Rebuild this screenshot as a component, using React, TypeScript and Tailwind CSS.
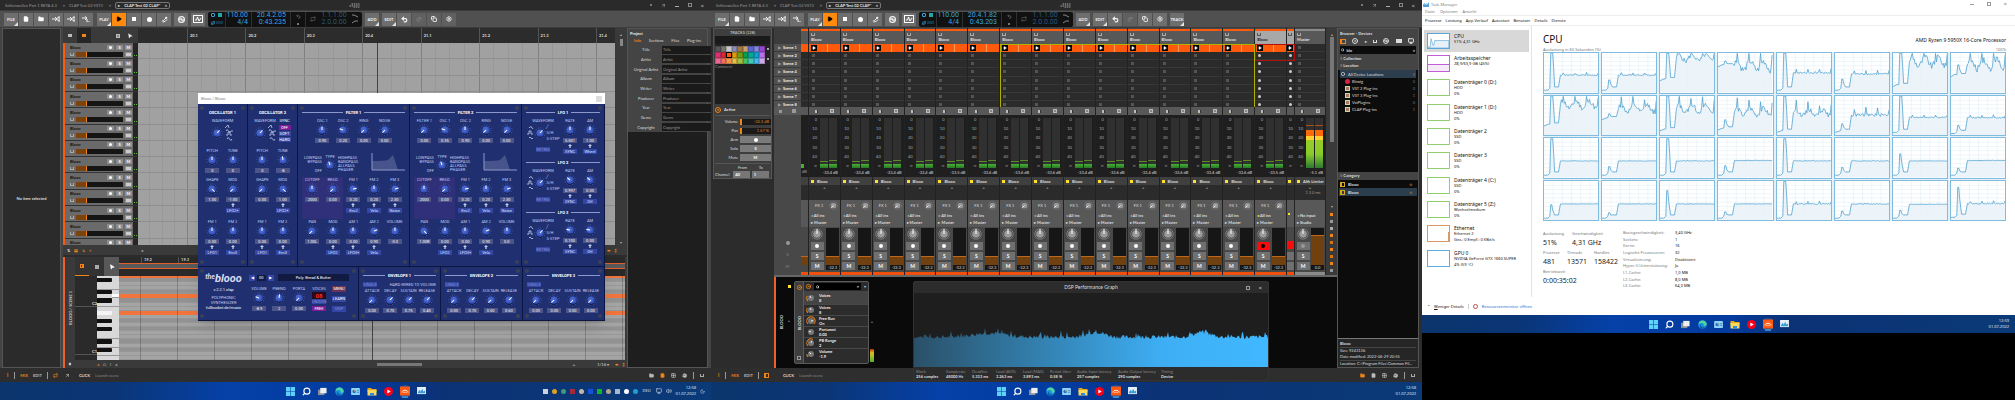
import type { ReactNode } from "react"
import {
  ArrowUpRight,
  Circle,
  CircleDot,
  Copy,
  Disc3,
  FileText,
  Folder,
  Grid2x2,
  Hand,
  Monitor,
  Moon,
  MousePointer2,
  Play,
  Redo2,
  Repeat,
  Search,
  Settings,
  Undo2,
  Volume2,
} from "lucide-react"

/* ---------- helpers ---------- */

function noise(seed: number) {
  let s = seed * 9301 + 49297
  return () => {
    s = (s * 9301 + 49297) % 233280
    return s / 233280
  }
}

function range(n: number) {
  return Array.from({ length: n }, (_, i) => i)
}

/* ---------- windows taskbar ---------- */

function WindowsLogo() {
  return (
    <svg viewBox="0 0 10 10" className="size-[9px]">
      <path d="M0 0h4.7v4.7H0zM5.3 0H10v4.7H5.3zM0 5.3h4.7V10H0zM5.3 5.3H10V10H5.3z" fill="#5fd0f8" />
    </svg>
  )
}

function EdgeLogo() {
  return (
    <svg viewBox="0 0 10 10" className="size-[9px]">
      <circle cx="5" cy="5" r="4.8" fill="#1b8fd8" />
      <path d="M.5 4C1.5 0 8 -.8 9.6 4c.3 2-1.600 2.800-3.400 2.300C7 5 5.500 3 3.500 3.500 2 3.500 1 4 .5 4z" fill="#4fd6a0" />
      <path d="M3.500 5c-.8 2 .8 4 4.300 3.300C5.500 10.400 2.500 9.500 2.300 7c0-1 .5-1.700 1.200-2z" fill="#0b4f9c" />
    </svg>
  )
}

const trayColors = [
  "bg-[#c8d4e0]",
  "bg-[#e0a020] rounded-full",
  "bg-[#3f9a78] rounded-full",
  "bg-[#a8283c]",
  "bg-[#c9b7a6] rounded-full",
  "bg-[#1450d8]",
  "bg-[#12b42c]",
  "bg-[#b8a48c] rounded-full",
  "bg-[#a8b8cc]",
  "bg-white rounded-full",
  "bg-[#1fa0d0] rounded-full",
]

function Taskbar({ time, tray }: { time: string; tray?: boolean }) {
  return (
    <footer className="grid h-[18px] shrink-0 grid-cols-[1fr_auto_1fr] items-center bg-[linear-gradient(90deg,#0b356c_0%,#0b3575_16%,#0541a8_32%,#033a9e_52%,#0b3275_62%,#0b3a78_100%)]">
      <span />
      <nav className="flex items-center gap-[7px]" aria-label="Taskbar">
        <button aria-label="Start" className="grid w-[9px] place-items-center">
          <WindowsLogo />
        </button>
        <button aria-label="Search" className="grid w-[9px] place-items-center text-white">
          <Search className="size-[9px] -scale-x-100" strokeWidth={3} />
        </button>
        <button aria-label="Task view" className="grid w-[10px] place-items-center">
          <svg viewBox="0 0 10 10" className="size-[9px]">
            <rect x="0" y="3" width="7" height="6" fill="#8a8f98" />
            <rect x="2.500" y="1" width="7" height="6" fill="#eceef0" />
          </svg>
        </button>
        <button aria-label="Edge" className="grid w-[9px] place-items-center">
          <EdgeLogo />
        </button>
        <button aria-label="Widgets" className="grid w-[9px] place-items-center">
          <svg viewBox="0 0 10 8" className="h-[7px] w-[9px]">
            <rect width="10" height="8" rx="1" fill="#8fd4f6" />
            <circle cx="3.500" cy="4" r="2" fill="#1c72c4" />
            <path d="M3.500 4V2a2 2 0 0 1 2 2z" fill="#f79a3c" />
            <path d="M6.500 3h2.500M6.500 5h2.500" stroke="#2c78b4" strokeWidth=".8" />
          </svg>
        </button>
        <button aria-label="Explorer" className="grid w-[10px] place-items-center">
          <svg viewBox="0 0 10 9" className="h-[9px] w-[10px]">
            <path d="M.5 1h3.500l1 1h4.500v3h-9z" fill="#e8a81c" />
            <path d="M.5 3h9v5.500h-9z" fill="#fbd85c" />
            <path d="M3 6h4v2.500H3z" fill="#2c8ce0" />
          </svg>
        </button>
        <button aria-label="YouTube Music" className="grid w-[9px] place-items-center">
          <svg viewBox="0 0 10 10" className="size-[9px]">
            <circle cx="5" cy="5" r="5" fill="#f8001c" />
            <path d="M3.700 2.700 7.500 5 3.700 7.300z" fill="#fff" />
          </svg>
        </button>
        <button aria-label="Bitwig Studio" className="grid w-[10px] place-items-center rounded-sm bg-white/10">
          <svg viewBox="0 0 10 12" className="h-[13px] w-[10px]">
            <rect y="1" width="10" height="9" fill="#ff5a14" />
            <path d="M2 7c0-3 6-3 6 0M4 7.500V6.300M6 7.500V6.300" stroke="#fff" strokeWidth=".9" fill="none" />
            <rect x="2" y="11" width="6" height="1" fill="#5fc4f8" />
          </svg>
        </button>
        <button aria-label="Task Manager" className="grid w-[9px] place-items-center">
          <svg viewBox="0 0 10 9" className="h-[8px] w-[9px]">
            <rect width="10" height="8" fill="#e4f0f8" />
            <path d="M1 6 3 3l1 2 2-3 1 3 2-1v3H1z" fill="#3b9cd8" />
          </svg>
        </button>
      </nav>
      <div className="flex items-center justify-end gap-[4px] pr-[6px] font-['Open_Sans',sans-serif] text-[4px] leading-[6px] text-white/90">
        {tray && (
          <>
            <span className="flex gap-[4px]">
              {trayColors.map((c) => (
                <i key={c} className={`size-[5px] ${c}`} />
              ))}
            </span>
            <span className="px-[1px]">DEU</span>
            <Monitor className="size-[6px]" />
            <Volume2 className="size-[6px]" />
          </>
        )}
        <span className="text-right">
          {time}
          <br />
          01.07.2022
        </span>
        {tray && <Moon className="size-[5px]" />}
      </div>
    </footer>
  )
}

/* ---------- Bitwig shared chrome ---------- */

function TitleBar() {
  return (
    <header className="flex h-[10px] shrink-0 items-center bg-[#2a2a2a] pr-[7px] pl-[5px] text-[#9a9a9a]">
      <div className="flex flex-1 items-center" role="tablist">
        <button role="tab" className="flex w-[64px] items-center justify-between pr-[4px]">
          Schlenwellen Part 1 BETA 4.3 <b>×</b>
        </button>
        <button role="tab" className="flex w-[46px] items-center justify-between pr-[4px]">
          CLAP Test 02 VST3 <b>×</b>
        </button>
        <button
          role="tab"
          aria-selected="true"
          className="flex h-[7px] w-[55px] items-center justify-between rounded-[2px] border border-[#777] px-[2px] font-bold text-[#e4e4e4]"
        >
          <span>▸</span> CLAP Test 02 CLAP* <b>×</b>
        </button>
      </div>
      <svg viewBox="0 0 10 5" className="h-[5px] w-[11px]">
        <path d="M2 1h8M0 3h10M4 5h6" stroke="#aaa" strokeWidth="1" strokeDasharray="1.500 .7" />
      </svg>
      <div className="flex flex-1 items-center justify-end gap-[9px] text-[#c4c4c4]">
        <i className="size-[2px] bg-[#777]" />
        <button aria-label="Full screen">
          <ArrowUpRight className="size-[5px]" />
        </button>
        <button aria-label="Minimize" className="mt-[2px] h-px w-[4px] bg-[#aaa]" />
        <button aria-label="Restore" className="size-[4px] border border-[#888]" />
        <button aria-label="Close" className="text-[6px]">
          ×
        </button>
      </div>
    </header>
  )
}

function Tool({ label, on, dim, menu, children }: { label: string; on?: boolean; dim?: boolean; menu?: boolean; children?: ReactNode }) {
  return (
    <button
      aria-label={label}
      className={`relative grid h-[13px] w-[14px] place-items-center font-bold ${
        on ? "bg-[#ff8a0c] text-black" : dim ? "bg-[#606060] text-[#888]" : "bg-[#6e6e6e] text-[#f2f2f2]"
      }`}
    >
      {children ?? label}
      {menu && <i className="absolute right-0 bottom-0 size-0 border-2 border-t-transparent border-r-white/80 border-b-white/80 border-l-transparent" />}
    </button>
  )
}

function ArrowDisk({ down }: { down?: boolean }) {
  return (
    <svg viewBox="0 0 8 6" className="h-[6px] w-[8px]">
      <path d={down ? "M0 2h4M3 .5 5 2 3 4M5 3v3h3" : "M0 3h4M3 1l2 2-2 2M6 1v4h2V1z"} stroke="currentColor" fill="none" />
    </svg>
  )
}

function Toolbar({ position, clock, tracks }: { position: string; clock: string; tracks?: boolean }) {
  return (
    <div className="flex h-[18px] shrink-0 items-center gap-[3px] border-y border-[#3c3c3c] bg-[#505050] pl-[4px]">
      <div className="flex gap-px">
        <Tool label="FILE" menu />
        <Tool label="New">
          <FileText className="size-[6px] fill-white" />
        </Tool>
        <Tool label="Open">
          <Folder className="size-[6px] fill-white" />
        </Tool>
        <Tool label="Save">
          <ArrowDisk />
        </Tool>
        <Tool label="Export">
          <ArrowDisk />
        </Tool>
        <Tool label="Import">
          <ArrowDisk down />
        </Tool>
      </div>
      <div className="flex gap-px pl-[1px]">
        <Tool label="PLAY" menu />
        <Tool label="Play" on>
          <Play className="size-[6px] fill-black" />
        </Tool>
        <Tool label="Stop">
          <i className="size-[4px] bg-white" />
        </Tool>
        <Tool label="Record">
          <i className="size-[5px] rounded-full bg-white" />
        </Tool>
        <Tool label="Automation">
          <svg viewBox="0 0 8 8" className="size-[7px]">
            <path d="M1 6 3 5 6 2M2 7l3-1 2-2" stroke="#fff" fill="none" />
            <circle cx="6" cy="2" r="1.200" fill="#fff" />
          </svg>
        </Tool>
      </div>
      <Tool label="Fill">
        <Disc3 className="size-[7px]" strokeWidth={4} />
      </Tool>
      <Tool label="Groove">
        <svg viewBox="0 0 10 8" className="h-[8px] w-[10px]">
          <rect x=".5" y=".5" width="9" height="7" fill="none" stroke="#fff" />
          <path d="M2 5h1.500l1-3 1.500 4 2-3" stroke="#fff" fill="none" />
        </svg>
      </Tool>
      <div className="flex h-[15px] w-[154px] divide-x divide-[#303030] rounded-[2px] bg-[#111] font-[Roboto,sans-serif] text-[7px] leading-[7px] text-[#3aa4e0]">
        <div className="grid w-[18px] grid-cols-2 place-items-center px-[2px]">
          <i className="size-[4px] rounded-[1px] border border-[#3aa4e0]" />
          <i className="size-[4px] bg-[#20a8a8]" />
          <Repeat className="size-[4px]" strokeWidth={4} />
          <i className="h-[3px] w-[7px] bg-[#143848]" />
        </div>
        <div className="w-[26px] pr-[3px] text-right">
          110.00
          <br />
          4/4
        </div>
        <div className="w-[39px] pr-[4px] text-right">
          {position}
          <br />
          {clock}
        </div>
        <div className="grid w-[15px] place-items-center text-[#999]">
          <Undo2 className="size-[5px]" />
          <i className="size-[2px] bg-[#777]" />
        </div>
        <div className="flex flex-1 items-center justify-between px-[4px] text-[#2b587a]">
          <Repeat className="size-[6px] text-[#777]" />
          <span className="text-right">
            1.1.1.00
            <br />
            2.0.0.00
          </span>
          <svg viewBox="0 0 6 12" className="h-[12px] w-[6px]">
            <path d="M0 2h2l4 2M0 10l3-2h3" stroke="#888" fill="none" />
          </svg>
        </div>
      </div>
      <Tool label="ADD" menu />
      <div className="flex gap-px">
        <Tool label="EDIT" menu />
        <Tool label="Undo">
          <Undo2 className="size-[7px]" strokeWidth={4} />
        </Tool>
        <Tool label="Redo" dim>
          <Redo2 className="size-[6px]" strokeWidth={3} />
        </Tool>
        <Tool label="Duplicate" dim={!tracks}>
          <Copy className="size-[6px] text-[#ddd]" strokeWidth={4} />
        </Tool>
        <Tool label="Settings" dim={!tracks}>
          <Settings className="size-[6px] text-[#ddd]" strokeWidth={4} />
        </Tool>
      </div>
      {tracks && <Tool label="TRACK" menu />}
    </div>
  )
}

function Piano({ className = "border-[#aaa]" }: { className?: string }) {
  return <i className={`h-[3px] w-[4px] border border-t-0 ${className}`} />
}

function StatusBar({ mixer }: { mixer?: boolean }) {
  return (
    <div className="flex h-[14px] shrink-0 items-center gap-[5px] bg-[#2e2e2e] px-[7px] text-[#bbb]">
      <b className="text-[5px] text-[#f08418]">i</b>
      <i className="ml-[1px] h-[7px] w-px bg-[#999]" />
      <button className="font-bold text-[#f08418]">MIX</button>
      <button className="font-bold">EDIT</button>
      <i className="h-[7px] w-px bg-[#999]" />
      {mixer ? (
        <i className="mr-[5px] size-[5px] border border-l-2 border-[#f08418]" />
      ) : (
        <>
          <Repeat className="size-[5px] text-[#f08418]" strokeWidth={3} />
          <ArrowUpRight className="ml-[2px] size-[5px]" strokeWidth={3} />
        </>
      )}
      <b className="ml-[4px] text-[#ddd]">CLICK</b>
      <span className="text-[#8a8a8a]">Launch scene</span>
      <div className="ml-auto flex items-center gap-[6px]">
        <Folder className={`size-[5px] fill-current ${mixer ? "text-[#f08418]" : ""}`} />
        <FileText className={`size-[5px] fill-current ${mixer ? "" : "text-[#f08418]"}`} />
        <Grid2x2 className="size-[5px]" strokeWidth={3} />
        <Hand className="size-[5px] fill-current" />
        <i className="h-[7px] w-px bg-[#999]" />
        <Piano />
      </div>
    </div>
  )
}

/* ---------- screen 1: arranger ---------- */

function TrackHeader() {
  return (
    <div className="flex border-b border-[#333] bg-[#6a6a6a] pl-[3px]">
      <div className="flex min-w-0 flex-1 flex-col justify-center gap-[2px] pl-[2px]">
        <div className="flex items-center">
          <b className="flex-1 leading-[5px] text-[#111]">Blooo</b>
          <div className="flex gap-[2px] pr-[1px] font-bold text-white">
            <button aria-label="Arm" className="grid h-[5px] w-[7px] place-items-center bg-[#8c8c8c]">
              <i className="size-[3px] rounded-full bg-white" />
            </button>
            <button className="grid h-[5px] w-[7px] place-items-center bg-[#8c8c8c]">S</button>
            <button className="grid h-[5px] w-[7px] place-items-center bg-[#8c8c8c]">M</button>
          </div>
        </div>
        <div className="flex items-center gap-[2px] pr-[1px]">
          <Piano />
          <div className="h-[5px] flex-1 bg-[#151515]">
            <div className="h-full w-[11px] border-r border-[#f08418] bg-[#7a4310]" />
          </div>
          <i className="h-[5px] w-[7px] border border-[#8c8c8c] bg-[#ccc]" />
        </div>
      </div>
      <div className="flex w-[5px] items-end gap-px bg-[#262626] px-px pb-[2px]">
        <i className="h-px w-px bg-[#4fc030]" />
        <i className="h-px w-px bg-[#4fc030]" />
      </div>
    </div>
  )
}

const beats = ["20.1", "20.2", "20.3", "20.4", "21.1", "21.2", "21.3", "21.4"]
const blackRows = [1, 4, 6, 9, 11, 13, 16, 18]
const noteRows = [0, 5, 9]

function Arranger() {
  return (
    <div className="flex h-[217px] shrink-0">
      <section className="w-[75px] shrink-0">
        <div className="flex h-[15px] items-center bg-[#3a3a3a] text-[#bbb]">
          <div className="grid h-full w-[14px] place-items-center">
            <i className="h-[3px] w-[4px] bg-current" />
          </div>
          <div className="grid h-full w-[14px] place-items-center bg-[#262626]">
            <i className="h-[3px] w-[4px] bg-[#f08418]" />
          </div>
          <i className="ml-auto size-[4px] border border-current bg-[#888]" />
          <MousePointer2 className="mr-[5px] ml-[7px] size-[6px] rotate-12 fill-white" />
        </div>
        <div className="h-[202px] overflow-hidden border-l-2 border-[#ff5a0c]">
          <div className="grid h-[212px] grid-rows-13">
            {range(13).map((i) => (
              <TrackHeader key={i} />
            ))}
          </div>
        </div>
      </section>
      <section className="flex min-w-0 flex-1 flex-col">
        <div className="grid h-[15px] grid-cols-[49px_repeat(7,minmax(0,1fr))_19px] bg-[#2c2c2c]">
          <span />
          {beats.map((b) => (
            <span key={b} className="border-l border-[#555] pt-[5px] pl-[2px] font-bold text-[#ddd]">
              {b}
            </span>
          ))}
        </div>
        <div className="relative flex-1 overflow-hidden bg-[#a1a1a1]">
          <div className="grid h-full grid-cols-[49px_repeat(7,minmax(0,1fr))_19px]">
            {range(9).map((i) => (
              <div key={i} className={`grid grid-cols-4 divide-x divide-[#989898] ${i ? "border-l border-[#808080]" : ""}`}>
                {i < 8 && range(4).map((n) => <i key={n} />)}
              </div>
            ))}
          </div>
          <div className="absolute inset-x-0 top-0 grid h-[212px] grid-rows-13">
            {range(13).map((i) => (
              <i key={i} className="border-b border-[#8e8e8e]" />
            ))}
          </div>
          <i className="absolute inset-y-0 left-1/2 w-px bg-[#444]" />
        </div>
      </section>
      <div className="flex w-[12px] shrink-0 flex-col items-center justify-between bg-[#3a3a3a] pt-[4px] text-[#aaa]">
        <div className="flex flex-col items-center gap-[2px]">
          <span>▴</span>
          <i className="h-[7px] w-[3px] bg-[#888]" />
        </div>
        <span>▾</span>
      </div>
    </div>
  )
}

function PianoRoll() {
  return (
    <div className="flex flex-1 border-l-2 border-[#f0602c] bg-[#3a3a3a]">
      <div className="flex w-[10px] flex-col items-center justify-between pt-[34px] pb-[2px]">
        <b className="rotate-180 text-[#ccc] [writing-mode:vertical-rl]">BLOOO / SCENE 1</b>
        <Circle className="size-[4px] fill-[#ccc]" />
      </div>
      <div className="flex w-[44px] flex-col">
        <div className="flex h-[19px] items-center bg-[#333]">
          <span className="grid h-full w-[14px] place-items-center border-b border-[#f08418]">
            <i className="size-[4px] border border-r-2 border-[#f08418]" />
          </span>
          <span className="grid flex-1 place-items-center">
            <i className="size-[4px] bg-[#aaa]" />
          </span>
          <span className="grid h-full w-[15px] place-items-center bg-[#585858]">
            <MousePointer2 className="size-[6px] rotate-12 fill-white text-white" />
          </span>
        </div>
        <div className="flex h-[84px]">
          <div className="flex w-[22px] flex-col items-end bg-[#2a2a2a] pt-[25px] font-bold text-[#ddd]">
            <span className="w-full border-b border-[#555] text-right">C2</span>
            <span className="mt-auto mb-[5px] w-full border-b border-[#555] text-right">C1</span>
          </div>
          <div className="grid flex-1 grid-rows-[2px_repeat(20,minmax(0,1fr))] bg-[#d8d8d8]">
            {range(21).map((i) => (
              <i
                key={i}
                className={
                  blackRows.includes(i)
                    ? `w-[15px] rounded-r-[1px] ${i === 9 ? "bg-[#f4f4f4]" : "bg-[#111]"}`
                    : `${i === 5 ? "ml-[15px] bg-white" : ""} ${i % 2 ? "border-b border-[#999]" : ""}`
                }
              />
            ))}
          </div>
        </div>
        <div className="flex flex-1 items-center gap-[4px] pl-[22px] text-[#bbb]">
          <span className="text-[#f08418]">◂</span>
          <span>⌂</span>
          <span>I</span>
          <span>◂</span>
        </div>
      </div>
      <div className="flex min-w-0 flex-1 flex-col pr-[2px]">
        <div className="h-[19px] bg-[#2a2a2a]">
          <div className="grid h-[6px] grid-cols-[22px_repeat(13,minmax(0,1fr))_2px] leading-[6px] font-bold text-[#ccc]">
            <span />
            {["19.2", "19.3", "19.4", "20.1", "20.2", "20.3", "20.4", "21.1", "21.2", "21.3", "21.4", "22.1", "22.2"].map((b) => (
              <span key={b} className="border-l border-[#555] pl-[2px]">
                {b}
              </span>
            ))}
          </div>
          <div className="h-[6px] border-y border-[#e0602c] bg-[#5a5a5a]" />
        </div>
        <div className="relative h-[84px]">
          <div className="grid h-full grid-rows-[2px_repeat(20,minmax(0,1fr))]">
            {range(21).map((i) => (
              <i
                key={i}
                className={
                  noteRows.includes(i) ? "bg-[#f0743c]" : `border-b border-[#989898] ${blackRows.includes(i) ? "bg-[#929292]" : "bg-[#a4a4a4]"}`
                }
              />
            ))}
          </div>
          <div className="absolute inset-0 grid grid-cols-[22px_repeat(13,minmax(0,1fr))_2px]">
            {range(14).map((i) => (
              <i key={i} className="border-r border-black/20" />
            ))}
          </div>
          <i className="absolute inset-y-0 left-1/2 w-px bg-[#444]" />
        </div>
        <div className="flex flex-1 items-center text-[#bbb]">
          <i className="ml-[51%] h-[3px] w-[45px] bg-[#777]" />
          <span className="ml-auto pr-[22px] font-bold">+</span>
          <span className="pr-[6px] font-bold">1/16 ▾</span>
          <span className="flex gap-[4px] font-bold text-[#f08418]">
            <span>⇹</span>
            <span>↕</span>
          </span>
        </div>
      </div>
    </div>
  )
}

function ProjectPanel() {
  const fields = ["Title", "Artist", "Original Artist", "Album", "Writer", "Producer", "Year", "Genre", "Copyright"]
  return (
    <aside className="flex w-[81px] shrink-0 flex-col border border-[#555] bg-[#1e1e1e]">
      <div className="bg-[#444] px-[2px] pt-[2px] text-[#ddd]">
        <h2 className="leading-[5px] font-bold text-[#eee]">Project</h2>
        <div className="flex h-[9px] items-center justify-between px-[4px]" role="tablist">
          <button role="tab" aria-selected="true" className="font-bold text-[#f08418]">
            Info
          </button>
          <button role="tab">Sections</button>
          <button role="tab">Files</button>
          <button role="tab">Plug-ins</button>
        </div>
        <div className="grid h-[87px] grid-rows-9">
          {fields.map((f) => (
            <div key={f} className="flex items-center">
              <label htmlFor={f} className="w-[32px] text-center">
                {f}
              </label>
              <input id={f} placeholder={f} className="h-[8px] min-w-0 flex-1 bg-[#1a1a1a] pl-[1px] placeholder:text-[#999]" />
            </div>
          ))}
        </div>
      </div>
    </aside>
  )
}

/* ---------- the blooo synth ---------- */

function BlueKnob({ angle = 0 }: { angle?: number }) {
  return (
    <svg viewBox="0 0 14 14" className="size-[12px] shrink-0">
      <circle cx="7" cy="7" r="6" fill="none" stroke="#8ea0dc" strokeWidth="1" strokeDasharray=".5 2.640" />
      <circle cx="7" cy="7.500" r="4.900" fill="#0f1a4c" />
      <circle cx="7" cy="7" r="4.500" fill="#3452b8" />
      <circle cx="6.500" cy="6.300" r="3" fill="#4664cc" />
      <path d="M7 7V2.800" stroke="#fff" strokeWidth="1.200" transform={`rotate(${angle} 7 7)`} />
    </svg>
  )
}

type KnobSpec = { label: string; value?: string; source?: string; angle?: number; hot?: boolean }

function KnobCell({ label, value, source, angle, hot }: KnobSpec) {
  return (
    <div className={`flex min-w-0 flex-1 flex-col items-center ${hot ? "bg-[#30307a]" : ""}`}>
      <span className="h-[6px] leading-[6px] whitespace-nowrap">{label}</span>
      <BlueKnob angle={angle} />
      {value && <span className="mt-[2px] h-[5px] w-[14px] bg-[#4c5488] text-center leading-[5px] text-white">{value}</span>}
      {source && (
        <>
          <svg viewBox="0 0 6 6" className="my-px h-[4px] w-[4px]">
            <path d="M3 0l3 3H4v3H2V3H0z" fill="#c8d0f0" />
          </svg>
          <button className="h-[5px] w-[14px] bg-[#3446a4] leading-[5px] text-[#dfe4ff]">{source}</button>
        </>
      )}
    </div>
  )
}

function KnobRow({ knobs, className }: { knobs: KnobSpec[]; className: string }) {
  return (
    <div className={`flex ${className}`}>
      {knobs.map((k) => (
        <KnobCell key={k.label} {...k} />
      ))}
    </div>
  )
}

function PanelTitle({ children, line }: { children: ReactNode; line?: boolean }) {
  return (
    <h3 className="flex h-[14px] shrink-0 items-center gap-[3px] pt-[2px] font-bold whitespace-nowrap text-white">
      {line && <i className="h-px flex-1 bg-[#8c98cc]" />}
      <span className="mx-auto">{children}</span>
      {line && <i className="h-px flex-1 bg-[#8c98cc]" />}
    </h3>
  )
}

function Screws() {
  return (
    <>
      {["top-[2px] left-[2px]", "top-[2px] right-[2px]", "bottom-[2px] left-[2px]", "bottom-[2px] right-[2px]"].map((p) => (
        <i key={p} className={`absolute size-[4px] rounded-full bg-[#3a4058] ${p}`} />
      ))}
    </>
  )
}

const panel = "relative border-r border-b border-[#0c1640] bg-[#1f2f70] px-[4px]"

function WaveSelector() {
  return (
    <div className="flex items-center justify-center gap-px">
      <BlueKnob angle={45} />
      <svg viewBox="0 0 10 18" className="h-[18px] w-[10px]">
        <path
          d="M1 4l3-3 1 3M2 7q1-3 2.500 0t2.500 0h2M2 11h2V8h2v3h2M3 15q1-3 2.500 0t2.500 0"
          stroke="#c8d0f0"
          strokeWidth=".8"
          fill="none"
        />
      </svg>
    </div>
  )
}

function Oscillator({ index, rows }: { index: number; rows: KnobSpec[][] }) {
  return (
    <section className={`w-[50px] ${panel}`}>
      <Screws />
      <PanelTitle>OSCILLATOR {index}</PanelTitle>
      <div className="flex h-[30px] justify-center gap-px">
        <div className="flex flex-col items-center">
          <span className="h-[6px] leading-[6px]">WAVEFORM</span>
          <WaveSelector />
        </div>
        {index === 2 && (
          <div className="flex w-[14px] flex-col items-center gap-px text-white">
            <span className="h-[6px] leading-[6px]">SYNC</span>
            <button className="h-[5px] w-[12px] bg-[#7a1c98] leading-[5px]">OFF</button>
            <button className="h-[5px] w-[12px] bg-[#3446a4] leading-[5px]">SOFT</button>
            <button className="h-[5px] w-[12px] bg-[#3446a4] leading-[5px]">HARD</button>
          </div>
        )}
      </div>
      <KnobRow className="h-[29px]" knobs={rows[0]} />
      <KnobRow className="h-[42px]" knobs={rows[1]} />
      <KnobRow className="h-[42px]" knobs={rows[2]} />
    </section>
  )
}

function Filter({ index, rows }: { index: number; rows: KnobSpec[][] }) {
  return (
    <section className={`w-[112px] ${panel}`}>
      <Screws />
      <PanelTitle line>FILTER {index}</PanelTitle>
      <KnobRow className={`h-[29px] ${index === 1 ? "px-[10px]" : ""}`} knobs={rows[0]} />
      <div className="flex h-[30px] items-center gap-px">
        <div className="flex w-[20px] flex-col items-end pt-[4px] leading-[4px]">
          <span>LOWPASS</span>
          <span>BYPASS</span>
          <span className="mt-[5px]">OFF</span>
        </div>
        <div className="flex w-[14px] flex-col items-center">
          <span>TYPE</span>
          <BlueKnob angle={-20} />
        </div>
        <div className="flex w-[20px] flex-col pt-[4px] leading-[4px]">
          <span>HIGHPASS</span>
          <span>BANDPASS</span>
          <span>ALLPASS</span>
          <span>PHASER</span>
        </div>
        <svg viewBox="0 0 34 18" className="ml-auto h-[18px] w-[34px]">
          <path d="M1 8q12 0 16-1l5-5 5 15H1z" fill="#47548c" />
          <path d="M1 0v17h33" stroke="#8c98cc" fill="none" />
        </svg>
      </div>
      <KnobRow className="h-[42px]" knobs={rows[1]} />
      <KnobRow className="h-[42px]" knobs={rows[2]} />
    </section>
  )
}

function Lfo({ index, rate, am, source, angle }: { index: number; rate: string; am: string; source: string; angle: number }) {
  return (
    <div>
      <PanelTitle line>LFO {index}</PanelTitle>
      <div className="flex h-[36px]">
        <div className="flex w-[34px] flex-col items-center">
          <span className="h-[6px] leading-[6px]">WAVEFORM</span>
          <div className="flex items-center">
            <svg viewBox="0 0 8 16" className="h-[16px] w-[8px]">
              <path d="M3 3q2-3 4 1M1 9h2V6h2v3h2M3 13q1-2 2 0t2 0" stroke="#c8d0f0" strokeWidth=".8" fill="none" />
            </svg>
            <BlueKnob angle={45} />
            <span className="leading-[6px]">
              ╱<br />
              S/H
              <br />
              S-STEP
            </span>
          </div>
          <button className="mt-auto mb-[2px] h-[5px] w-[14px] bg-[#3446a4] leading-[5px] text-[#8090d0]">RETRIG</button>
        </div>
        <KnobCell label="RATE" value={rate} source="SYNC" angle={angle} />
        <KnobCell label="AM" value={am} source={source} angle={angle} />
      </div>
    </div>
  )
}

function Envelope({ index, values, note }: { index: number; values: string[]; note?: boolean }) {
  const labels = ["ATTACK", "DECAY", "SUSTAIN", "RELEASE"]
  return (
    <section className={`w-[82px] ${panel}`}>
      <Screws />
      <PanelTitle line>ENVELOPE {index}</PanelTitle>
      <div className="flex h-[6px] items-center justify-between">
        <button className="h-[5px] w-[14px] bg-[#3446a4] leading-[5px] text-[#8090d0]">SINGLE</button>
        {note && <span className="whitespace-nowrap">HARD-WIRED TO VOLUME</span>}
      </div>
      <KnobRow
        className="h-[27px] pt-[1px]"
        knobs={labels.map((label, i) => ({ label, value: values[i], angle: values[i] === "0.00" ? -135 : 45 }))}
      />
    </section>
  )
}

function BloooWindow() {
  return (
    <div className="absolute top-[93px] left-[198px] flex w-[407px] flex-col font-[Roboto,sans-serif] text-[4px] text-[#c4ccf0] shadow-lg">
      <div className="flex h-[11px] items-center justify-between bg-white px-[3px] text-[#888]">
        <span>Blooo / Blooo</span>
        <button aria-label="Close" className="size-[6px] bg-[#ddd]" />
      </div>
      <div className="flex h-[163px]">
        <Oscillator
          index={1}
          rows={[
            [{ label: "PITCH", value: "0" }, { label: "TUNE", value: "0" }],
            [{ label: "SHAPE", value: "1.00", angle: 135 }, { label: "MOD", value: "-1.00", source: "LFO2+", angle: -135 }],
            [{ label: "FM 1", value: "0.00", source: "LFO1" }, { label: "FM 2", value: "0.00", source: "Env3" }],
          ]}
        />
        <Oscillator
          index={2}
          rows={[
            [{ label: "PITCH", value: "0" }, { label: "TUNE", value: "-8", angle: -10 }],
            [{ label: "SHAPE", value: "0.00", angle: -135 }, { label: "MOD", value: "1.00", source: "LFO2+", angle: 135 }],
            [{ label: "FM 1", value: "0.00", source: "LFO1" }, { label: "FM 2", value: "0.00", source: "Env3" }],
          ]}
        />
        <Filter
          index={1}
          rows={[
            [
              { label: "OSC 1", value: "0.90" },
              { label: "OSC 2", value: "0.20", angle: -70 },
              { label: "RING", value: "0.00", angle: -135 },
              { label: "NOISE", value: "0.00", angle: -135 },
            ],
            [
              { label: "CUTOFF", value: "2000", hot: true },
              { label: "RESO.", value: "0.00", angle: -135, hot: true },
              { label: "FM 1", value: "0.20", source: "Env2", angle: 80 },
              { label: "FM 2", value: "0.20", source: "Velo" },
              { label: "FM 3", value: "2.30", source: "Noise", angle: 75 },
            ],
            [
              { label: "PAN", value: "1.00L", angle: -135 },
              { label: "MOD", value: "0.00", source: "LFO2" },
              { label: "AM 1", value: "0.00", source: "LFO3+" },
              { label: "AM 2", value: "0.90", source: "Velo", angle: 70 },
              { label: "VOLUME", value: "-0.0" },
            ],
          ]}
        />
        <Filter
          index={2}
          rows={[
            [
              { label: "FILTER 1", value: "0.00", angle: -135 },
              { label: "OSC 1", value: "0.35", angle: -70 },
              { label: "OSC 2", value: "0.90" },
              { label: "RING", value: "0.00", angle: -135 },
              { label: "NOISE", value: "0.00", angle: -135 },
            ],
            [
              { label: "CUTOFF", value: "2000", hot: true },
              { label: "RESO.", value: "0.00", angle: -135, hot: true },
              { label: "FM 1", value: "0.20", source: "Env2", angle: 80 },
              { label: "FM 2", value: "0.20", source: "Velo" },
              { label: "FM 3", value: "2.30", source: "Noise", angle: 75 },
            ],
            [
              { label: "PAN", value: "1.00R", angle: 135 },
              { label: "MOD", value: "0.00", source: "LFO2" },
              { label: "AM 1", value: "0.00", source: "LFO3+" },
              { label: "AM 2", value: "0.90", source: "Velo", angle: 70 },
              { label: "VOLUME", value: "0.0" },
            ],
          ]}
        />
        <section className={`flex-1 ${panel}`}>
          <Screws />
          <Lfo index={1} rate="5.501" am="1.00" source="Wheel" angle={0} />
          <Lfo index={2} rate="0.997" am="0.00" source="Off" angle={-50} />
          <Lfo index={3} rate="0.100" am="0.00" source="Off" angle={-80} />
        </section>
      </div>
      <div className="flex h-[54px]">
        <section className={`flex flex-1 gap-[4px] pt-[7px] ${panel}`}>
          <Screws />
          <div className="flex w-[43px] flex-col items-center leading-[5px]">
            <b className="pb-[3px] text-[11px] leading-[10px] text-[#d8dcf0] italic">
              <sup className="text-[7px]">the</sup>blooo
            </b>
            <span className="pb-[3px] text-white">v.2.2.1.clap</span>
            <span>POLYPHONIC</span>
            <span>SYNTHESIZER</span>
            <a href="#music" className="text-white">
              fullbucket.de/music
            </a>
          </div>
          <div className="flex-1 pr-[5px]">
            <div className="flex h-[7px] items-center gap-[2px] text-white">
              <button aria-label="Previous" className="h-[6px] w-[6px] bg-[#3446a4] leading-[6px]">
                ◀
              </button>
              <span className="bg-[#111a40] px-[2px] leading-[6px]">00</span>
              <button aria-label="Next" className="h-[6px] w-[6px] bg-[#3446a4] leading-[6px]">
                ▶
              </button>
              <span className="ml-[2px] flex-1 bg-[#111a40] text-center leading-[7px]">Poly: Bread &amp; Butter</span>
            </div>
            <div className="flex pt-[5px]">
              <KnobCell label="VOLUME" value="-8.9" angle={-70} />
              <KnobCell label="P.BEND" value="2" angle={10} />
              <KnobCell label="PORTA" value="0.00" angle={-135} />
              <div className="flex flex-1 flex-col items-center">
                <span className="h-[6px] leading-[6px]">VOICES</span>
                <b className="w-[14px] bg-[#2a0a18] text-center text-[6px] leading-[7px] text-[#ff2a1c]">08</b>
                <button className="h-[5px] w-[14px] bg-[#3446a4] leading-[5px] text-[#8090d0]">UNISON</button>
                <button className="mt-[2px] h-[5px] w-[14px] bg-[#7a1c98] leading-[5px] text-white">FREE</button>
              </div>
              <div className="flex flex-1 flex-col items-center gap-[4px] text-white">
                <button className="h-[6px] w-[14px] bg-[#6a3458] leading-[6px]">MENU</button>
                <button className="h-[6px] w-[14px] bg-[#3446a4] leading-[6px]">LEARN</button>
                <button className="h-[6px] w-[14px] bg-[#3446a4] leading-[6px] text-[#8090d0]">SKIP</button>
              </div>
            </div>
          </div>
        </section>
        <Envelope index={1} values={["0.00", "0.70", "0.75", "0.40"]} note />
        <Envelope index={2} values={["0.00", "0.70", "0.00", "0.60"]} />
        <Envelope index={3} values={["0.00", "0.00", "0.00", "0.00"]} />
      </div>
    </div>
  )
}

function ArrangerScreen() {
  return (
    <div className="relative flex flex-col overflow-hidden bg-[#2e2e2e]">
      <TitleBar />
      <Toolbar position="20.4.2.05" clock="0:43.235" />
      <main className="flex flex-1 bg-[#444] pr-[3px]">
        <aside className="mx-[2px] grid w-[59px] shrink-0 place-items-center border border-[#555] bg-[#2b2b2b]">
          <b className="text-[#ddd]">No item selected</b>
        </aside>
        <div className="flex min-w-0 flex-1 flex-col">
          <Arranger />
          <div className="flex h-[12px] shrink-0 items-center gap-[4px] border-b-2 border-[#2c2c2c] bg-[#3a3a3a] px-[4px] font-bold text-[#f08418]">
            <span className="text-[#ccc]">⇅</span>
            <span>▤</span>
            <span>↳</span>
            <span>×</span>
            <span className="ml-[46px] text-[#aaa]">◂</span>
            <span className="ml-auto">⇹</span>
            <span className="pr-[6px]">↕</span>
          </div>
          <PianoRoll />
        </div>
        <ProjectPanel />
      </main>
      <StatusBar />
      <Taskbar time="12:58" tray />
      <BloooWindow />
    </div>
  )
}

/* ---------- screen 2: mixer ---------- */

const palette = [
  "bg-[#555]", "bg-[#777]", "bg-[#c8c8c8]", "bg-[#8a8fb8]", "bg-[#a07840]", "bg-[#c8a070]", "bg-[#5868d0]", "bg-[#8488e0]", "bg-[#9848d0]",
  "bg-[#d83070]", "bg-[#d82830]", "bg-[#ff5a0c]", "bg-[#d89c10]", "bg-[#709c18]", "bg-[#08a050]", "bg-[#08a890]", "bg-[#10a0d8]", "bg-[#b870e8]",
  "bg-[#e86890]", "bg-[#f07058]", "bg-[#f89050]", "bg-[#e0c048]", "bg-[#a0c040]", "bg-[#48c060]", "bg-[#40c8b0]", "bg-[#48b8f0]", "bg-[#d0a8e8]",
]

function GreyKnob({ small }: { small?: boolean }) {
  return (
    <svg viewBox="0 0 12 12" className={small ? "size-[9px]" : "size-[12px]"}>
      <circle cx="6" cy="6" r="5.200" fill="#484848" stroke="#8c8c8c" strokeWidth=".8" />
      <circle cx="6" cy="6" r="3.800" fill="#9a9a9a" />
      <path d={small ? "M6 6 3 9" : "M6 6V1"} stroke="#fff" />
    </svg>
  )
}

function MeterBar({ master, right }: { master?: boolean; right: boolean }) {
  if (master) {
    return (
      <div className="flex flex-col bg-[#303030] pt-[7px]">
        <i className="h-px bg-[#b05010]" />
        <i className="mt-[4px] h-[6px] bg-[#ff6a08]" />
        <i className="h-[4px] bg-[#ffd030]" />
        <i className="flex-1 bg-linear-to-b from-[#98cc28] via-[#88cc28] to-[#2c7a30]" />
      </div>
    )
  }
  return (
    <div className="flex flex-col justify-end bg-[#303030]">
      <i className={`h-px bg-[#5a8c28] ${right ? "mb-[3px]" : "mb-[2px]"}`} />
      <i className="h-[4px] bg-linear-to-b from-[#48b030] to-[#287828]" />
    </div>
  )
}

type StripProps = { name?: string; db?: string; selected?: boolean; armed?: boolean; master?: boolean }

function Strip({ name = "Blooo", db = "-33.4", selected, armed, master }: StripProps) {
  return (
    <div className="flex h-full flex-col overflow-hidden border-r border-[#222] pt-px">
      <i className={`h-[2px] shrink-0 ${master ? "bg-[#8a8a8a]" : "bg-[#ff5a0c]"}`} />
      <div className={`flex h-[13px] shrink-0 flex-col justify-between px-[2px] py-[2px] font-bold ${selected ? "bg-[#a8a8a8] text-[#222]" : "bg-[#585858] text-[#e4e4e4]"}`}>
        <Piano className={selected ? "border-[#555]" : "border-[#aaa]"} />
        <span className="leading-[4px]">{name}</span>
      </div>
      <div className="h-[63px] shrink-0 overflow-hidden">
        <div className="grid h-[65px] grid-rows-8 bg-[#2b2b2b]">
          {range(8).map((i) =>
            i === 0 && !master ? (
              <button key={i} aria-label="Launch clip" className="flex items-center bg-[#ff5a0c] pl-[2px]">
                <span className="grid size-[6px] place-items-center bg-black">
                  <Play className="size-[4px] fill-white text-white" />
                </span>
                <i className="ml-[10px] h-full w-px bg-[#ff9a60]" />
              </button>
            ) : (
              <div key={i} className="flex items-center border-b border-[#383838] pl-[3px]">
                <i className={armed ? "size-[3px] rounded-full bg-[#ccc]" : "size-[3px] bg-[#555]"} />
              </div>
            ),
          )}
        </div>
      </div>
      <div className="grid h-[8px] shrink-0 grid-cols-2 place-items-center divide-x divide-[#333] bg-[#585858]">
        <i className="size-[3px] bg-[#bbb]" />
        <i className="size-[4px] border border-[#bbb] bg-[#888]" />
      </div>
      <div className="flex h-[62px] shrink-0 flex-col bg-[#1f1f1f] pt-[3px]">
        <div className="flex gap-[3px]">
          <div className="flex w-[8px] flex-col justify-between text-right leading-[4px] text-[#aaa]">
            {["0", "10", "20", "30", "40", "∞"].map((n) => (
              <span key={n}>{n}</span>
            ))}
          </div>
          <div className="grid h-[50px] w-[17px] shrink-0 grid-cols-2 gap-px">
            <MeterBar master={master} right={false} />
            <MeterBar master={master} right />
          </div>
        </div>
        <span className="pt-[3px] pr-[2px] text-right leading-[4px] text-[#ddd]">{db} dB</span>
      </div>
      <div className="flex h-[8px] shrink-0 items-center gap-[3px] bg-[#404040] pl-[2px] font-bold whitespace-nowrap text-[#ddd]">
        <i className="size-[3px] shrink-0 bg-[#ffe030]" />
        {master ? "Afik Limiter" : "Blooo"}
      </div>
      <div className="h-[15px] shrink-0 bg-[#2b2b2b] text-center font-bold text-[#999]">
        +{master && <span className="block pl-[6px] font-normal">1 2.0 ms</span>}
      </div>
      <div className="flex h-[11px] shrink-0 items-center justify-between bg-[#585858] pr-[2px] pl-[6px] text-[#ddd]">
        {!master && (
          <>
            FX 1 <GreyKnob small />
          </>
        )}
      </div>
      <div className="flex h-[16px] shrink-0 flex-col justify-center bg-[#585858] pl-[2px] font-bold text-[#ddd]">
        <span className="leading-[7px] whitespace-nowrap">
          <span className={armed ? "text-[#ffe030]" : "text-[#aaa]"}>◂</span> {master ? "No input" : "All ins"}
        </span>
        <span className="leading-[7px] whitespace-nowrap">▸ {master ? "Studio" : "Master"}</span>
      </div>
      <div className="flex h-[45px] shrink-0 justify-between bg-[#484848] px-px pt-px pb-[2px]">
        <div className="flex w-[14px] flex-col items-center justify-between font-bold text-white">
          <GreyKnob />
          <button aria-label="Arm" className={`grid h-[8px] w-[13px] place-items-center ${armed ? "bg-[#f80c0c]" : "bg-[#707070]"}`}>
            <i className={`size-[4px] rounded-full ${armed ? "bg-black" : master ? "bg-[#999]" : "bg-white"}`} />
          </button>
          <button className="h-[8px] w-[13px] bg-[#707070] text-[5px]">S</button>
          <button className="h-[8px] w-[13px] bg-[#707070] text-[5px]">M</button>
        </div>
        <div className="flex w-[13px] flex-col justify-end bg-[#161616] text-center text-[#ddd]">
          <i className={`border-t border-[#c06818] bg-[#70400f] ${master ? "h-[30px]" : "h-[9px]"}`} />
          <span className="leading-[5px]">{master ? "0.0" : "-32.3"}</span>
        </div>
      </div>
      <i className={`h-[3px] shrink-0 ${master ? "bg-[#8a8a8a]" : "bg-[#f0500c]"}`} />
    </div>
  )
}

/* a strip scrolled almost out of view, only its first or last pixels remain */
function EdgeStrip({ armed }: { armed?: boolean }) {
  return (
    <div className="flex h-full flex-col border-r border-[#222] pt-px">
      <i className="h-[2px] bg-[#ff5a0c]" />
      <div className={`flex h-[13px] flex-col py-[2px] pl-px ${armed ? "bg-[#a8a8a8]" : "bg-[#585858]"}`}>
        {armed && <Piano className="border-[#555]" />}
      </div>
      <div className="h-[63px] overflow-hidden">
        <div className="grid h-[65px] grid-rows-8 bg-[#2b2b2b]">
          <span className="flex items-center bg-[#ff5a0c]">
            {armed && (
              <span className="grid size-[6px] place-items-center bg-black">
                <Play className="size-[4px] fill-white text-white" />
              </span>
            )}
          </span>
          {range(7).map((i) => (
            <span key={i} className="flex items-center border-b border-[#383838] pl-[2px]">
              {armed && <i className="size-[3px] rounded-full bg-[#ccc]" />}
            </span>
          ))}
        </div>
      </div>
      <div className="h-[8px] bg-[#585858]" />
      <div className="flex h-[62px] flex-col justify-between bg-[#1f1f1f] pt-[3px] pb-[3px] text-center leading-[4px] text-[#aaa]">
        {armed ? (
          <div className="flex h-[50px] flex-col justify-between">
            {["0", "10", "20", "30", "40", "∞"].map((n) => (
              <span key={n}>{n}</span>
            ))}
          </div>
        ) : (
          <>
            <i className="mt-[46px] h-[4px] w-[3px] bg-[#48b030]" />
            <span>dB</span>
          </>
        )}
      </div>
      <div className="flex h-[8px] items-center bg-[#404040] pl-px">{armed && <i className="size-[3px] bg-[#ffe030]" />}</div>
      <div className="h-[15px] bg-[#2b2b2b]" />
      <div className="h-[27px] bg-[#585858] pt-[13px] pl-px">{armed && <i className="block size-[2px] bg-[#ffe030]" />}</div>
      <div className="flex h-[45px] flex-col bg-[#484848] pt-[14px]">
        {armed ? (
          <>
            <i className="h-[8px] bg-[#f80c0c]" />
            <i className="mt-[3px] h-[8px] bg-[#707070]" />
            <i className="mt-[2px] h-[8px] bg-[#707070]" />
          </>
        ) : (
          <i className="mt-[15px] h-[9px] border-t border-[#c06818] bg-[#70400f]" />
        )}
      </div>
      <i className="h-[3px] bg-[#f0500c]" />
    </div>
  )
}

const dbs = ["-33.4", "-33.4", "-33.4", "-33.4", "-33.5", "-33.6", "-33.6", "-33.6", "-33.4", "-33.6", "-33.4", "-33.6", "-33.4", "-33.6", "-33.5"]

function Mixer() {
  return (
    <div className="flex h-[247px] shrink-0 bg-[#484848]">
      <div className="flex w-[27px] shrink-0 flex-col">
        <div className="h-[16px] bg-[#3c3c3c]" />
        <div className="h-[63px] overflow-hidden">
          <div className="grid h-[65px] grid-rows-8 bg-[#505050]">
            {range(8).map((i) => (
              <button key={i} className="flex items-center gap-[2px] border-b border-[#3a3a3a] pl-[4px] font-bold text-[#eee]">
                <span className="text-[#999]">▶</span> Scene {i + 1}
              </button>
            ))}
          </div>
        </div>
        <div className="grid h-[8px] grid-cols-2 place-items-center bg-[#585858]">
          <i className="size-[3px] bg-[#999]" />
          <i className="size-[4px] bg-[#999]" />
        </div>
        <div className="flex flex-1 flex-col items-center justify-end gap-[7px] pb-[6px] font-bold text-[#777]">
          <i className="size-[4px] rounded-full bg-[#999]" />
          <span>S</span>
          <span>M</span>
        </div>
      </div>
      <div className="relative grid min-w-0 flex-1 grid-cols-[8px_repeat(15,minmax(0,1fr))_8px_31px]">
        <EdgeStrip />
        {dbs.map((db, i) => (
          <Strip key={i} db={db} selected={i === 14} armed={i === 14} />
        ))}
        <EdgeStrip armed />
        <Strip name="Master" db="-5.1" master />
        {/* launcher selection and record target */}
        <div className="pointer-events-none absolute inset-x-0 top-[16px] grid h-[63px] grid-cols-[8px_repeat(15,minmax(0,1fr))_8px_31px]">
          <i className="col-start-8 col-end-16 border border-b-0 border-[#b0b000]" />
          <i className="col-start-16 col-end-18 h-[17px] border border-[#b01010]" />
        </div>
      </div>
      <div className="flex w-[11px] shrink-0 flex-col items-center justify-between bg-[#3a3a3a] pt-[4px] pb-[3px] text-[#aaa]">
        <div className="flex flex-col items-center">
          <span>▴</span>
          <i className="h-[105px] w-[4px] bg-[#777]" />
        </div>
        <div className="flex flex-col items-center gap-[4px]">
          <span>▾</span>
          {["bg-[#f08418]", "bg-[#999]", "bg-[#aaa]", "bg-[#f08418]", "bg-[#d87410]", "bg-[#f08418]", "bg-[#d87410]", "bg-[#f08418]", "bg-[#999]"].map((c, i) => (
            <i key={i} className={`h-[3px] w-[3px] ${c}`} />
          ))}
        </div>
      </div>
    </div>
  )
}

function DeviceChain() {
  const params = [
    ["Voices", "8"],
    ["Free Run", "On"],
    ["Portamnt", "0.00"],
    ["PB Range", "2"],
    ["Volume", "-1.9"],
  ]
  return (
    <div className="flex flex-1 border-t-2 border-[#666] bg-[#0a0a0a]">
      <div className="flex items-center border-l-2 border-[#f0602c] pl-[3px] font-bold text-[#ddd]">
        <span className="rotate-180 [writing-mode:vertical-rl]">BLOOO</span>
        <div className="flex h-full w-[10px] flex-col items-center pt-[8px]">
          <i className="size-[3px] bg-[#ffe030]" />
          <span className="pt-[30px] text-[#888]">+</span>
        </div>
      </div>
      <div className="my-[4px] flex w-[75px] rounded-[2px] border border-[#5a5a5a] bg-[#2c2c2c]">
        <div className="flex w-[9px] flex-col items-center justify-between border-r border-[#5a5a5a] bg-[#3e3e3e] py-[3px]">
          <CircleDot className="size-[5px] text-[#f08418]" strokeWidth={4} />
          <b className="rotate-180 text-[#ddd] [writing-mode:vertical-rl]">BLOOO</b>
          <i className="h-[4px] w-[4px] border border-[#999]" />
        </div>
        <div className="flex-1">
          <div className="flex h-[9px] items-center gap-[3px] px-[2px]">
            <CircleDot className="size-[5px] text-[#f08418]" strokeWidth={4} />
            <label className="flex h-[7px] flex-1 items-center bg-black px-[2px] text-white">
              <Search className="size-[4px]" strokeWidth={4} />
              <input aria-label="Filter parameters" className="w-full min-w-0" />
              <b>×</b>
            </label>
            <span className="text-[#ccc]">▾</span>
          </div>
          <div className="flex h-[13px] items-center gap-[3px] bg-[#444] pl-[2px] text-[#eee]">
            <ParamKnob turn={20} />
            <b className="leading-[5px]">
              Voices
              <br />8
            </b>
          </div>
          {params.map(([name, value], i) => (
            <div key={name} className="flex h-[11px] items-center gap-[3px] border-t border-[#484848] pl-[2px] text-[#eee]">
              <ParamKnob turn={[20, 75, 0, 45, 12][i]} />
              <b className="leading-[5px]">
                {name}
                <br />
                {value}
              </b>
            </div>
          ))}
        </div>
      </div>
      <div className="flex flex-col items-center justify-between pt-[42px] pb-[6px] pl-[1px]">
        <b className="text-[#888]">+</b>
        <i className="h-[13px] w-[4px] bg-linear-to-b from-[#b02010] via-[#d8c020] via-30% to-[#48b030]" />
      </div>
    </div>
  )
}

function ParamKnob({ turn }: { turn: number }) {
  return (
    <svg viewBox="0 0 12 12" className="size-[10px]">
      <circle cx="6" cy="6" r="5" fill="none" stroke="#f08418" strokeWidth="1.200" pathLength={100} strokeDasharray={`${turn} 100`} transform="rotate(135 6 6)" />
      <circle cx="6" cy="6" r="3.600" fill="#777" />
      <path d="M6 6 3.500 5" stroke="#fff" transform={`rotate(${turn * 2} 6 6)`} />
    </svg>
  )
}

function DspWindow() {
  const rand = noise(7)
  const points = range(355)
    .map((x) => {
      const swell = 4 * Math.exp(-((x - 75) ** 2) / 500) + 5 * Math.exp(-((x - 182) ** 2) / 150) + 5 * Math.exp(-((x - 288) ** 2) / 130)
      const spike = rand() > 0.93 ? 4 : 0
      return `L${x} ${(46 - swell - spike - rand() * 4 - (x === 147 ? 7 : 0)).toFixed(1)}`
    })
    .join("")
  const stats = [
    ["Block", "256 samples", "w-[30px]"],
    ["Samplerate", "48000 Hz", "w-[26px]"],
    ["Deadline", "5.333 ms", "w-[24px]"],
    ["Load (AVG)", "3.263 ms", "w-[27px]"],
    ["Load (MAX)", "3.893 ms", "w-[27px]"],
    ["Period Jitter", "0.58 %", "w-[27px]"],
    ["Audio Input latency", "257 samples", "w-[41px]"],
    ["Audio Output latency", "290 samples", "w-[43px]"],
    ["Timing", "Device", "w-[40px]"],
  ]
  return (
    <div className="absolute top-[281px] left-[202px] w-[356px] rounded-t-[2px] border border-[#333] bg-[#2c2c2c]">
      <div className="grid h-[11px] grid-cols-[1fr_auto_1fr] items-center text-[#ddd]">
        <span />
        <h2 className="text-[5px]">DSP Performance Graph</h2>
        <div className="flex items-center justify-end gap-[9px] pr-[6px]">
          <button aria-label="Maximize" className="size-[4px] border border-[#999]" />
          <button aria-label="Close" className="text-[6px]">
            ×
          </button>
        </div>
      </div>
      <svg viewBox="0 0 354 74" preserveAspectRatio="none" className="h-[74px] w-full bg-[#1e1e1e]">
        <defs>
          <linearGradient id="load">
            <stop offset="0" stopColor="#2a5068" />
            <stop offset=".5" stopColor="#3794cc" />
            <stop offset=".7" stopColor="#3eaef4" />
            <stop offset="1" stopColor="#40b8ff" />
          </linearGradient>
        </defs>
        <path d={`M0 74${points}V74z`} fill="url(#load)" />
      </svg>
      <dl className="flex h-[13px] items-center pl-[2px]">
        {stats.map(([name, value, width]) => (
          <div key={name} className={`${width} leading-[5px] whitespace-nowrap`}>
            <dt className="text-[#888]">{name}</dt>
            <dd className="font-bold text-[#ddd]">{value}</dd>
          </div>
        ))}
      </dl>
    </div>
  )
}

function Browser() {
  const locations = ["Bitwig", "VST 2 Plug-ins", "VST 3 Plug-ins", "VstPlugins", "CLAP Plug-ins"]
  return (
    <aside className="flex w-[82px] shrink-0 flex-col border border-[#555] bg-[#0c0c0c] text-[#ddd]">
      <div className="bg-[#444] px-[2px] pt-[3px] font-bold">
        <h2 className="leading-[4px]">Browser - Devices</h2>
        <div className="flex h-[10px] items-center justify-between pr-[2px]">
          <i className="h-[5px] w-[6px] border border-l-2 border-[#f08418]" />
          <CircleDot className="size-[6px]" strokeWidth={4} />
          <span>▸</span>
          <Piano className="border-[#ddd]" />
          <Disc3 className="size-[6px]" strokeWidth={4} />
          <i className="h-[4px] w-[6px] bg-[#ddd]" />
          <Monitor className="size-[6px]" strokeWidth={4} />
        </div>
        <label className="flex h-[8px] items-center gap-[2px] bg-[#0c0c0c] px-[1px]">
          <Search className="size-[4px]" strokeWidth={4} />
          <input aria-label="Search devices" defaultValue="blo" className="w-full min-w-0" />
          <b>×</b>
        </label>
        <p className="h-[8px] leading-[9px]">≡ Collection</p>
        <p className="h-[8px] leading-[8px]">≡ Location</p>
      </div>
      <div className="h-[102px] px-[2px]">
        <p className="flex h-[8px] items-center gap-[3px] bg-[#2c3e4e] px-px">
          <Circle className="size-[4px]" strokeWidth={4} /> All Device Locations <span className="ml-auto text-[#888]">3</span>
        </p>
        {locations.map((l, i) => (
          <p key={l} className="flex h-[7px] items-center gap-[2px] pl-[5px]">
            <i className={i ? "size-[5px] border border-[#c8d8a8] bg-[#a87860]" : "size-[5px] rounded-full bg-[#e02040]"} />
            {l}
            <span className="ml-auto pr-px text-[#777]">{["0", "0", "1", "0", "1"][i]}</span>
          </p>
        ))}
      </div>
      <p className="h-[8px] bg-[#444] px-[2px] leading-[8px] font-bold">≡ Category</p>
      {["bg-transparent", "bg-[#2c3e4e]"].map((bg) => (
        <p key={bg} className={`mx-px flex h-[8px] items-center gap-[3px] px-px font-bold ${bg}`}>
          <i className="size-[5px] border border-l-2 border-[#d8a820]" /> Blooo
          <span className="ml-auto pr-[3px] text-[#a07820]">☆</span>
        </p>
      ))}
      <div className="mt-auto border-t border-[#777] bg-[#262626] px-[2px] pt-[2px] leading-[6px]">
        <p className="border-b border-[#444] font-bold">Blooo</p>
        <p>Size: 9243136</p>
        <p className="border-b border-[#444]">Date modified: 2022-06-29 20:55</p>
        <p className="whitespace-nowrap">Location: C:\Program Files\Common Fil…</p>
      </div>
    </aside>
  )
}

function Inspector() {
  return (
    <aside className="mx-[2px] w-[59px] shrink-0 self-start border border-[#555] bg-[#3e3e3e] px-px text-[#ddd]">
      <h2 className="h-[7px] text-center leading-[8px]">TRACKS (128)</h2>
      <input aria-label="Track name" className="block h-[8px] w-full bg-[#1a1a1a]" />
      <div className="flex bg-[#222]">
        <div className="mt-[2px] grid h-[18px] flex-1 grid-cols-9">
          {palette.map((c, i) => (
            <i key={i} className={`border ${c} ${i === 11 ? "border-black" : "border-black/20"}`} />
          ))}
        </div>
        <div className="flex w-[5px] flex-col items-center justify-around">
          <i className="h-[2px] w-[2px] bg-[#aaa]" />
          <i className="h-[2px] w-[2px] bg-[#aaa]" />
        </div>
      </div>
      <label htmlFor="comment" className="block h-[6px] bg-[#1e1e1e] leading-[6px] text-[#888]">
        Comment
      </label>
      <textarea id="comment" className="block h-[34px] w-full resize-none bg-[#1e1e1e]" />
      <p className="flex h-[12px] items-center gap-[3px] border-b border-[#555] font-bold">
        <CircleDot className="size-[6px] text-[#f08418]" strokeWidth={4} /> Active
      </p>
      <div className="grid grid-cols-[23px_31px] items-center gap-x-[2px] pt-[1px] text-right leading-[9px]">
        <span>Volume</span>
        <span className="flex h-[6px] items-center justify-end border-l-2 border-[#f08418] bg-[#1a1a1a] pr-[2px] text-[#e08420]">-32.3 dB</span>
        <span>Pan</span>
        <span className="flex h-[6px] items-center justify-end border-l-2 border-[#f08418] bg-[#1a1a1a] pr-[2px] text-[#e08420]">1.57 %</span>
        <span>Arm</span>
        <button aria-label="Arm" className="grid h-[7px] place-items-center bg-[#7a7a7a]">
          <i className="size-[4px] rounded-full bg-white" />
        </button>
        <span>Solo</span>
        <button className="h-[7px] bg-[#7a7a7a] leading-[7px] font-bold text-white">S</button>
        <span>Mute</span>
        <button className="h-[7px] bg-[#7a7a7a] leading-[7px] font-bold text-white">M</button>
      </div>
      <div className="mt-px grid grid-cols-3 items-center border-t border-[#555] leading-[7px]">
        <span />
        <label htmlFor="from" className="text-center">
          From
        </label>
        <label htmlFor="to" className="text-center">
          To
        </label>
        <span>Channel</span>
        <select id="from" className="h-[7px] w-[17px] appearance-none bg-[#777] pl-[2px] font-bold text-white">
          <option>All</option>
        </select>
        <select id="to" className="h-[7px] w-[17px] appearance-none bg-[#777] pl-[2px] font-bold text-white">
          <option>1</option>
        </select>
      </div>
    </aside>
  )
}

function MixerScreen() {
  return (
    <div className="relative flex flex-col overflow-hidden bg-[#2c2c2c]">
      <TitleBar />
      <Toolbar position="20.4.1.82" clock="0:43.203" tracks />
      <main className="flex flex-1 pr-[3px]">
        <Inspector />
        <div className="flex min-w-0 flex-1 flex-col">
          <Mixer />
          <DeviceChain />
        </div>
        <Browser />
      </main>
      <StatusBar mixer />
      <Taskbar time="12:58" />
      <DspWindow />
    </div>
  )
}

/* ---------- screen 3: task manager ---------- */

// [idle height, first peak, settled level, jitter] in percent, one entry per logical core
const cores = [
  [6, 100, 44, 3], [6, 32, 44, 3], [30, 100, 88, 12], [65, 80, 68, 16], [6, 100, 50, 5], [6, 34, 47, 4], [15, 100, 78, 16], [40, 70, 72, 18],
  [24, 100, 78, 13], [40, 55, 68, 12], [12, 100, 68, 12], [14, 40, 60, 12], [8, 100, 58, 10], [8, 30, 52, 8], [8, 100, 46, 3], [5, 26, 45, 3],
  [6, 98, 42, 1], [6, 28, 42, 1], [6, 98, 42, 2], [6, 30, 43, 1], [6, 98, 42, 2], [6, 26, 42, 2], [6, 60, 42, 1], [6, 24, 43, 1],
  [6, 40, 42, 1], [6, 20, 42, 1], [6, 76, 42, 1], [6, 22, 42, 1], [6, 99, 42, 3], [6, 24, 42, 2], [6, 26, 41, 1], [8, 84, 43, 3],
]

function corePath([idle, peak, level, jitter]: number[], seed: number) {
  const rand = noise(seed + 3)
  const narrow = peak < 90
  const wobble = jitter > 6 ? jitter / 3 : 0
  const pts = [
    [0, idle],
    [4, idle + wobble],
    [6, idle + 5],
    [7, peak],
    [narrow ? 8 : 9, peak],
    [narrow ? 9 : 10, peak * 0.6 + idle * 0.4],
    [11, idle + 8],
    [15, idle + 8],
    [17, level],
  ]
  for (let x = 18; x <= 56; x++) {
    const swing = jitter > 8 ? Math.sin((x - 16) / 2.2) * jitter * 0.7 : 0
    const spike = jitter > 2 && x % 12 === 8 ? jitter * 2 : 0
    pts.push([x, Math.min(99, level + swing + spike + (rand() - 0.5) * jitter)])
  }
  return pts.map(([x, y]) => `${x} ${(42 - y * 0.42).toFixed(1)}`).join("L")
}

function CoreChart({ index }: { index: number }) {
  const line = corePath(cores[index], index)
  return (
    <svg viewBox="0 0 56 42" preserveAspectRatio="none" className="size-full border border-[#7fbce0] bg-white">
      <path
        d="M9.500 0v42M19 0v42M28.500 0v42M38 0v42M47.500 0v42M0 4.500h56M0 9h56M0 13.500h56M0 18h56M0 22.500h56M0 27h56M0 31.500h56M0 36h56"
        stroke="#dcebf4"
        strokeWidth=".5"
      />
      <path d={`M0 42L${line}L56 42z`} fill="#e8f1f8" fillOpacity=".8" />
      <path d={`M${line}`} fill="none" stroke="#4a9fd0" strokeWidth=".8" />
    </svg>
  )
}

const devices = [
  ["Arbeitsspeicher", "28,9/63,9 GB (45%)", "", "border-[#c060d8]"],
  ["Datenträger 0 (D:)", "HDD", "0%", "border-[#90d070]"],
  ["Datenträger 1 (D:)", "HDD", "0%", "border-[#90d070]"],
  ["Datenträger 2", "SSD", "0%", "border-[#90d070]"],
  ["Datenträger 3", "SSD", "0%", "border-[#90d070]"],
  ["Datenträger 4 (C:)", "SSD", "0%", "border-[#90d070]"],
  ["Datenträger 5 (Z:)", "Wechselmedium", "0%", "border-[#90d070]"],
  ["Ethernet", "Ethernet 2", "Ges.: 0 Empf.: 0 KBit/s", "border-[#d89868]"],
  ["GPU 0", "NVIDIA GeForce GTX 1660 SUPER", "4% (59 °C)", "border-[#60acd8]"],
]

const specs = [
  ["Basisgeschwindigkeit:", "3,40 GHz"],
  ["Sockets:", "1"],
  ["Kerne:", "16"],
  ["Logische Prozessoren:", "32"],
  ["Virtualisierung:", "Deaktiviert"],
  ["Hyper-V-Unterstützung:", "Ja"],
  ["L1-Cache:", "1,0 MB"],
  ["L2-Cache:", "8,0 MB"],
  ["L3-Cache:", "64,0 MB"],
]

function Stat({ name, value, className = "" }: { name: string; value: string; className?: string }) {
  return (
    <div className={className}>
      <dt className="leading-[7px] text-[#777]">{name}</dt>
      <dd className="text-[7px] leading-[12px] text-[#222]">{value}</dd>
    </div>
  )
}

function TaskManagerScreen() {
  return (
    <div className="flex flex-col bg-black font-['Noto_Sans',sans-serif] text-[4px] text-[#111]">
      <div className="flex h-[315px] flex-col bg-white">
        <header className="flex h-[8px] items-center gap-[2px] pr-[8px] pl-px text-[#888]">
          <svg viewBox="0 0 7 6" className="h-[5px] w-[6px]">
            <path d="M0 6V3l2-2v3l2-3v3l3-4v6z" fill="#4a9fd8" />
          </svg>
          Task-Manager
          <div className="ml-auto flex items-center gap-[13px]">
            <button aria-label="Minimize" className="h-px w-[4px] bg-[#999]" />
            <button aria-label="Restore" className="size-[4px] border border-[#999]" />
            <button aria-label="Close" className="text-[6px] leading-[6px]">
              ×
            </button>
          </div>
        </header>
        <nav className="flex h-[8px] items-center gap-[5px] border-b border-[#eee] pl-[3px] text-[#777]">
          <button>Datei</button>
          <button>Optionen</button>
          <button>Ansicht</button>
        </nav>
        <div className="flex h-[10px] items-center gap-[4px] border-b border-[#eee] pl-[3px]" role="tablist">
          {["Prozesse", "Leistung", "App-Verlauf", "Autostart", "Benutzer", "Details", "Dienste"].map((t) => (
            <button key={t} role="tab" aria-selected={t === "Leistung"}>
              {t}
            </button>
          ))}
        </div>
        <div className="flex flex-1">
          <aside className="w-[110px] shrink-0 border-r border-[#e4e4e4] pt-[4px] pl-[2px]">
            <div className="mr-[2px] flex h-[22px] gap-[4px] bg-[#d8d8d8] pt-[3px] pl-[3px]">
              <svg viewBox="0 0 22 15" className="h-[16px] w-[23px] border border-[#5aa8d8] bg-white">
                <path d="M0 14h2l1-9 2 7h1l1-5h15v8H0z" fill="#e8f1f8" stroke="#5aa8d8" strokeWidth=".7" />
              </svg>
              <div className="leading-[6px]">
                <p className="text-[5px]">CPU</p>
                <p>51% 4,31 GHz</p>
              </div>
            </div>
            <div className="grid h-[219px] grid-rows-9">
              {devices.map(([name, info, usage, border], i) => (
                <div key={name} className="flex gap-[4px] pt-[3px] pl-[3px] whitespace-nowrap">
                  <div className={`flex h-[17px] w-[23px] shrink-0 items-end border bg-white ${border}`}>
                    {i === 0 && <i className="h-[7px] w-full border-t border-[#c060d8] bg-[#f6ecf8]" />}
                    {i === 7 && <i className="ml-auto h-[9px] w-px bg-[#d89868]" />}
                  </div>
                  <div className="leading-[6px]">
                    <p className="text-[5px]">{name}</p>
                    <p>{info}</p>
                    <p>{usage}</p>
                  </div>
                </div>
              ))}
            </div>
          </aside>
          <section className="flex min-w-0 flex-1 flex-col pt-[6px] pr-[9px] pl-[11px]">
            <div className="flex h-[14px] items-center justify-between">
              <h1 className="text-[10px] leading-[14px]">CPU</h1>
              <span className="pt-[2px] text-[5px]">AMD Ryzen 9 5950X 16-Core Processor</span>
            </div>
            <div className="flex h-[6px] items-center justify-between text-[#777]">
              <span>Auslastung in 60 Sekunden (%)</span>
              <span>100%</span>
            </div>
            <div className="grid h-[169px] grid-cols-8 grid-rows-4 gap-x-[2px] gap-y-px bg-[#e4f1f8]">
              {cores.map((_, i) => (
                <CoreChart key={i} index={i} />
              ))}
            </div>
            <div className="flex gap-[3px] pt-[9px]">
              <dl className="grid w-[77px] grid-cols-[24px_27px_26px] content-start">
                <Stat name="Auslastung" value="51%" />
                <Stat name="Geschwindigkeit" value="4,31 GHz" className="col-span-2 pl-[5px]" />
                <Stat name="Prozesse" value="481" />
                <Stat name="Threads" value="13571" />
                <Stat name="Handles" value="158422" />
                <Stat name="Betriebszeit" value="0:00:35:02" className="col-span-3" />
              </dl>
              <dl className="grid h-[60px] grid-cols-[52px_auto] grid-rows-9 leading-[6px]">
                {specs.map(([name, value]) => (
                  <div key={name} className="contents">
                    <dt className="text-[#777]">{name}</dt>
                    <dd>{value}</dd>
                  </div>
                ))}
              </dl>
            </div>
          </section>
        </div>
        <footer className="flex h-[18px] items-center gap-[4px] pl-[5px]">
          <span>⌃</span>
          <button>
            <u>W</u>eniger Details
          </button>
          <i className="h-[5px] w-px bg-[#ccc]" />
          <i className="size-[5px] rounded-full border border-[#c05050]" />
          <a href="#resmon" className="text-[#1a70d0]">
            Ressourcenmonitor öffnen
          </a>
        </footer>
      </div>
      <Taskbar time="12:59" />
    </div>
  )
}

export default function App() {
  return (
    <div className="grid min-h-screen grid-cols-[711fr_711fr_593fr] bg-black font-[Lato,sans-serif] text-[4px] leading-[5px]">
      <ArrangerScreen />
      <MixerScreen />
      <TaskManagerScreen />
    </div>
  )
}
